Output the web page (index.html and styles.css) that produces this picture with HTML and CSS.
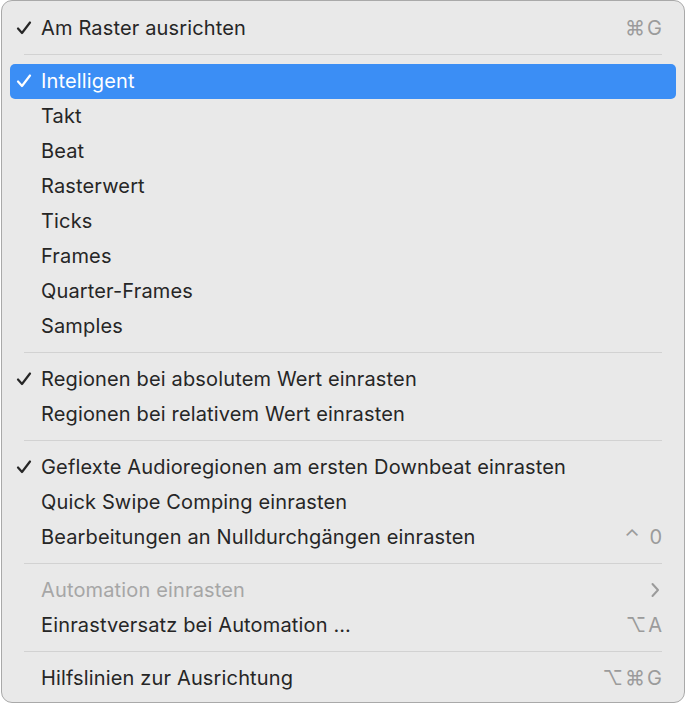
FILE: index.html
```html
<!DOCTYPE html>
<html>
<head>
  <title>Einrasten</title>
  <link rel="stylesheet" href="styles.css">
</head>
<body>
  <div class="menu">
    <div class="item"><span class="check"><svg width="16" height="14" viewBox="0 0 16 14"><path d="M2 7.5 L6 12 L14 1.5" fill="none" stroke="currentColor" stroke-width="2.2" stroke-linecap="round" stroke-linejoin="round"/></svg></span><span class="label">Am Raster ausrichten</span><span class="key">⌘G</span></div>
    <div class="sep"></div>
    <div class="item active"><span class="check"><svg width="16" height="14" viewBox="0 0 16 14"><path d="M2 7.5 L6 12 L14 1.5" fill="none" stroke="currentColor" stroke-width="2.2" stroke-linecap="round" stroke-linejoin="round"/></svg></span><span class="label">Intelligent</span></div>
    <div class="item"><span class="check"></span><span class="label">Takt</span></div>
    <div class="item"><span class="check"></span><span class="label">Beat</span></div>
    <div class="item"><span class="check"></span><span class="label">Rasterwert</span></div>
    <div class="item"><span class="check"></span><span class="label">Ticks</span></div>
    <div class="item"><span class="check"></span><span class="label">Frames</span></div>
    <div class="item"><span class="check"></span><span class="label">Quarter-Frames</span></div>
    <div class="item"><span class="check"></span><span class="label">Samples</span></div>
    <div class="sep"></div>
    <div class="item"><span class="check"><svg width="16" height="14" viewBox="0 0 16 14"><path d="M2 7.5 L6 12 L14 1.5" fill="none" stroke="currentColor" stroke-width="2.2" stroke-linecap="round" stroke-linejoin="round"/></svg></span><span class="label">Regionen bei absolutem Wert einrasten</span></div>
    <div class="item"><span class="check"></span><span class="label">Regionen bei relativem Wert einrasten</span></div>
    <div class="sep"></div>
    <div class="item"><span class="check"><svg width="16" height="14" viewBox="0 0 16 14"><path d="M2 7.5 L6 12 L14 1.5" fill="none" stroke="currentColor" stroke-width="2.2" stroke-linecap="round" stroke-linejoin="round"/></svg></span><span class="label">Geflexte Audioregionen am ersten Downbeat einrasten</span></div>
    <div class="item"><span class="check"></span><span class="label">Quick Swipe Comping einrasten</span></div>
    <div class="item"><span class="check"></span><span class="label">Bearbeitungen an Nulldurchgängen einrasten</span><span class="key">⌃ 0</span></div>
    <div class="sep"></div>
    <div class="item disabled"><span class="check"></span><span class="label">Automation einrasten</span>
      <svg class="arrow" width="10" height="16" viewBox="0 0 10 16"><path d="M2.5 2 L8 8 L2.5 14" fill="none" stroke="currentColor" stroke-width="2" stroke-linecap="round" stroke-linejoin="round"/></svg>
    </div>
    <div class="item"><span class="check"></span><span class="label">Einrastversatz bei Automation …</span><span class="key">⌥A</span></div>
    <div class="sep"></div>
    <div class="item"><span class="check"></span><span class="label">Hilfslinien zur Ausrichtung</span><span class="key">⌥⌘G</span></div>
  </div>
</body>
</html>
```

FILE: styles.css
```css
body { margin: 0; background: #ffffff; font-family: Inter, "Liberation Sans", sans-serif; }
.menu { margin: 0 1px; background: #e9e9e9; border: 1px solid #a9a9a9; border-radius: 11px; padding: 9.5px 8px 0 8px; box-sizing: border-box; height: 703px; }
.item { display: flex; align-items: center; height: 35px; padding: 0 14px 0 6px; border-radius: 5px; font-size: 20px; letter-spacing: 0.15px; color: #262626; }
.check { width: 25px; display: flex; align-items: center; }
.label { flex: 1; }
.key { color: #9b9b9b; letter-spacing: 2px; margin-right: -2px; }
.active { background: #3b8ef5; color: #ffffff; }
.disabled { color: #a6a6a6; }
.arrow { color: #9b9b9b; margin-right: 2px; }
.sep { height: 1px; background: #d2d2d2; margin: 8.5px 14px; }
```
